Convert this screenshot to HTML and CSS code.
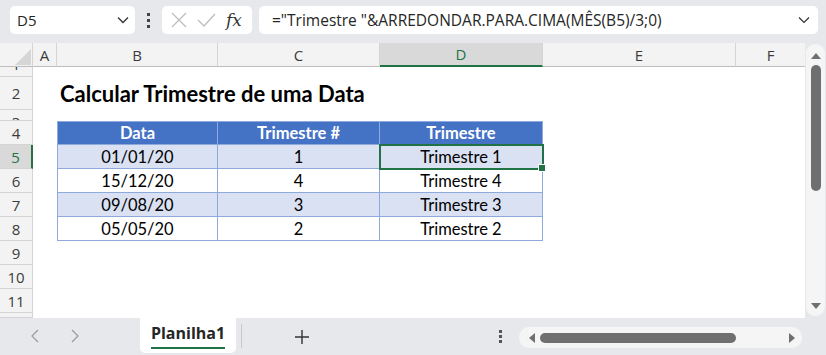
FILE: index.html
```html
<!DOCTYPE html>
<html lang="pt">
<head>
    <meta charset="UTF-8">
    <title>Planilha1</title>
    <link rel="stylesheet" href="styles.css">
</head>
<body>
    <div class="toolbar">
        <div class="namebox">
            <span>D5</span>
            <svg width="12" height="8" viewBox="0 0 12 8"><path d="M1 1.5 L6 6.5 L11 1.5" fill="none" stroke="#333" stroke-width="1.3"/></svg>
        </div>
        <div class="dots"><i></i><i></i><i></i></div>
        <div class="fxbox">
            <svg width="18" height="18" viewBox="0 0 18 18"><path d="M2 2 L16 16 M16 2 L2 16" stroke="#bdbdbd" stroke-width="1.3"/></svg>
            <svg width="20" height="18" viewBox="0 0 20 18"><path d="M2 9 L8 15 L19 3" fill="none" stroke="#bdbdbd" stroke-width="1.3"/></svg>
            <span class="fx">fx</span>
        </div>
        <div class="formula">
            <span>="Trimestre "&amp;ARREDONDAR.PARA.CIMA(MÊS(B5)/3;0)</span>
            <svg width="12" height="8" viewBox="0 0 12 8"><path d="M1 1.5 L6 6.5 L11 1.5" fill="none" stroke="#333" stroke-width="1.2"/></svg>
        </div>
    </div>

    <div class="workarea">
        <div class="sheet">
            <!-- cabeçalho das colunas -->
            <div class="corner"><svg width="20" height="20" viewBox="0 0 20 20"><path d="M19 3 L19 19 L3 19 Z" fill="#d6d6d6"/></svg></div>
            <div class="colhead">A</div>
            <div class="colhead">B</div>
            <div class="colhead">C</div>
            <div class="colhead active">D</div>
            <div class="colhead">E</div>
            <div class="colhead last">F</div>

            <!-- linha 1 -->
            <div class="rowhead r1"><span>1</span></div>
            <div class="cell"></div><div class="cell"></div><div class="cell"></div><div class="cell"></div><div class="cell"></div><div class="cell"></div>

            <!-- linha 2 -->
            <div class="rowhead">2</div>
            <div class="cell"></div>
            <div class="cell title">Calcular Trimestre de uma Data</div>
            <div class="cell"></div><div class="cell"></div><div class="cell"></div><div class="cell"></div>

            <!-- linha 3 -->
            <div class="rowhead r3"><span>3</span></div>
            <div class="cell"></div><div class="cell"></div><div class="cell"></div><div class="cell"></div><div class="cell"></div><div class="cell"></div>

            <!-- linha 4 -->
            <div class="rowhead">4</div>
            <div class="cell"></div>
            <div class="cell th first">Data</div>
            <div class="cell th">Trimestre #</div>
            <div class="cell th">Trimestre</div>
            <div class="cell"></div><div class="cell"></div>

            <div class="rowhead active">5</div>
            <div class="cell"></div>
            <div class="cell td band first">01/01/20</div>
            <div class="cell td band">1</div>
            <div class="cell td band selected">Trimestre 1<i class="handle"></i></div>
            <div class="cell"></div><div class="cell"></div>

            <div class="rowhead">6</div>
            <div class="cell"></div>
            <div class="cell td first">15/12/20</div>
            <div class="cell td">4</div>
            <div class="cell td">Trimestre 4</div>
            <div class="cell"></div><div class="cell"></div>

            <div class="rowhead">7</div>
            <div class="cell"></div>
            <div class="cell td band first">09/08/20</div>
            <div class="cell td band">3</div>
            <div class="cell td band">Trimestre 3</div>
            <div class="cell"></div><div class="cell"></div>

            <div class="rowhead">8</div>
            <div class="cell"></div>
            <div class="cell td first">05/05/20</div>
            <div class="cell td">2</div>
            <div class="cell td">Trimestre 2</div>
            <div class="cell"></div><div class="cell"></div>

            <div class="rowhead">9</div>
            <div class="cell"></div><div class="cell"></div><div class="cell"></div><div class="cell"></div><div class="cell"></div><div class="cell"></div>
            <div class="rowhead">10</div>
            <div class="cell"></div><div class="cell"></div><div class="cell"></div><div class="cell"></div><div class="cell"></div><div class="cell"></div>
            <div class="rowhead">11</div>
            <div class="cell"></div><div class="cell"></div><div class="cell"></div><div class="cell"></div><div class="cell"></div><div class="cell"></div>
            <div class="rowhead"></div>
            <div class="cell"></div><div class="cell"></div><div class="cell"></div><div class="cell"></div><div class="cell"></div><div class="cell"></div>
        </div>

        <div class="vscroll">
            <svg width="12" height="8" viewBox="0 0 12 8"><path d="M6 1 L11 7 L1 7 Z" fill="#6f6f6f"/></svg>
            <div class="vthumb"></div>
            <div class="vspace"></div>
            <svg width="12" height="8" viewBox="0 0 12 8"><path d="M1 1 L11 1 L6 7 Z" fill="#6f6f6f"/></svg>
        </div>
    </div>

    <div class="tabbar">
        <div class="navs">
            <svg width="10" height="14" viewBox="0 0 10 14"><path d="M8 1 L2 7 L8 13" fill="none" stroke="#9a9a9a" stroke-width="1.2"/></svg>
            <svg width="10" height="14" viewBox="0 0 10 14"><path d="M2 1 L8 7 L2 13" fill="none" stroke="#9a9a9a" stroke-width="1.2"/></svg>
        </div>
        <div class="tab"><span>Planilha1</span></div>
        <div class="sep"></div>
        <div class="addsheet">
            <svg width="16" height="16" viewBox="0 0 16 16"><path d="M8 1 V15 M1 8 H15" stroke="#333" stroke-width="1.4"/></svg>
        </div>
        <div class="hdots"><i></i><i></i><i></i></div>
        <div class="hscroll">
            <svg width="8" height="12" viewBox="0 0 8 12"><path d="M7 1 L7 11 L1 6 Z" fill="#6f6f6f"/></svg>
            <div class="hthumb"></div>
            <div class="hspace"></div>
            <svg width="8" height="12" viewBox="0 0 8 12"><path d="M1 1 L1 11 L7 6 Z" fill="#6f6f6f"/></svg>
        </div>
    </div>
</body>
</html>
```

FILE: styles.css
```css
body {
    margin: 0;
    width: 826px;
    height: 355px;
    overflow: hidden;
    background-color: #e6e8ec;
    font-family: "Open Sans", "Noto Sans", sans-serif;
    color: #262626;
}
.toolbar {
    height: 43px;
    display: flex;
    align-items: flex-start;
    padding: 6px 8px 0 10px;
    box-sizing: border-box;
}
.namebox {
    width: 125px;
    height: 28px;
    background-color: #fff;
    border-radius: 5px;
    box-sizing: border-box;
    display: flex;
    align-items: center;
    justify-content: space-between;
    padding: 0 6px 0 7px;
    font-size: 15px;
}
.dots {
    width: 27px;
    height: 28px;
    display: flex;
    flex-direction: column;
    align-items: center;
    justify-content: center;
    gap: 3px;
}
.dots i {
    width: 3px;
    height: 3px;
    background-color: #444;
    display: block;
}
.fxbox {
    width: 90px;
    height: 28px;
    background-color: #fff;
    border-radius: 5px;
    display: flex;
    align-items: center;
    padding: 0 6px 0 8px;
    box-sizing: border-box;
    gap: 8px;
}
.fx {
    font-family: "DejaVu Serif", "Liberation Serif", serif;
    font-style: italic;
    font-size: 17px;
    color: #333;
    margin-left: 2px;
}
.formula {
    flex: 1;
    margin-left: 7px;
    height: 28px;
    background-color: #fff;
    border-radius: 5px;
    display: flex;
    align-items: center;
    justify-content: space-between;
    padding: 0 8px 0 13px;
    box-sizing: border-box;
    font-size: 15.5px;
}
.workarea {
    display: flex;
    height: 275px;
}
.sheet {
    width: 805px;
    display: grid;
    grid-template-columns: 33px 24px 161px 162px 163px 193px 69px;
    grid-template-rows: 24px 10px 33px 11px repeat(8, 24px) 5px;
    background-color: #fff;
    overflow: hidden;
}
.corner {
    background-color: #f3f3f3;
    border-right: 1px solid #d4d4d4;
    border-bottom: 1px solid #bdbdbd;
    display: flex;
    align-items: flex-end;
    justify-content: flex-end;
}
.colhead {
    background-color: #f3f3f3;
    border-right: 1px solid #d4d4d4;
    border-bottom: 1px solid #bdbdbd;
    display: flex;
    align-items: center;
    justify-content: center;
    font-size: 15px;
    color: #3b3b3b;
}
.colhead.last {
    border-right: none;
}
.colhead.active {
    background-color: #d9d9d9;
    color: #217346;
    border-bottom: 2px solid #217346;
}
.rowhead {
    background-color: #f3f3f3;
    border-right: 1px solid #d4d4d4;
    border-bottom: 1px solid #d4d4d4;
    display: flex;
    align-items: center;
    justify-content: center;
    font-size: 15px;
    color: #3b3b3b;
    overflow: hidden;
}
.rowhead.r1 span,
.rowhead.r3 span {
    line-height: 24px;
}
.rowhead.r1 {
    align-items: flex-end;
}
.rowhead.r3 {
    align-items: flex-start;
}
.rowhead.active {
    background-color: #d9d9d9;
    color: #217346;
    border-right: 2px solid #217346;
}
.cell {
    box-sizing: border-box;
    display: flex;
    align-items: center;
    justify-content: center;
    font-family: "Lato", "Open Sans", sans-serif;
    font-size: 16.5px;
    color: #000;
    white-space: nowrap;
    position: relative;
}
.title {
    justify-content: flex-start;
    padding-left: 3px;
    font-size: 22px;
    font-weight: bold;
    overflow: visible;
}
.th {
    background-color: #4472c4;
    color: #fff;
    font-weight: bold;
    border-right: 1px solid #8ea9db;
    border-bottom: 1px solid #8ea9db;
    border-top: 1px solid #8ea9db;
}
.td {
    border-right: 1px solid #8ea9db;
    border-bottom: 1px solid #8ea9db;
}
.first {
    border-left: 1px solid #8ea9db;
}
.band {
    background-color: #d9e1f2;
}
.selected {
    outline: 2px solid #217346;
    outline-offset: -1px;
    z-index: 2;
}
.handle {
    position: absolute;
    right: -4px;
    bottom: -4px;
    width: 6px;
    height: 6px;
    background-color: #217346;
    border: 1px solid #fff;
}
.vscroll {
    width: 19px;
    margin: 1px 0 2px 1px;
    background-color: #f5f5f5;
    border-radius: 9px;
    display: flex;
    flex-direction: column;
    align-items: center;
    padding: 8px 0 6px;
    box-sizing: border-box;
}
.vthumb {
    width: 10px;
    height: 126px;
    margin-top: 5px;
    background-color: #6f6f6f;
    border-radius: 5px;
}
.vspace {
    flex: 1;
}
.tabbar {
    height: 37px;
    display: flex;
    align-items: flex-start;
}
.navs {
    width: 140px;
    display: flex;
    gap: 30px;
    padding: 11px 0 0 30px;
    box-sizing: border-box;
}
.tab {
    width: 96px;
    height: 35px;
    background-color: #fff;
    border-radius: 0 0 5px 5px;
    display: flex;
    justify-content: center;
}
.tab span {
    font-size: 16px;
    font-weight: bold;
    color: #262626;
    height: 27px;
    margin-top: 4px;
    border-bottom: 2px solid #217346;
    box-sizing: border-box;
}
.sep {
    width: 1px;
    height: 24px;
    margin: 6px 0 0 5px;
    background-color: #c8c8c8;
}
.addsheet {
    width: 120px;
    padding: 10px 0 0 52px;
    box-sizing: border-box;
}
.hdots {
    width: 20px;
    margin-left: 137px;
    padding-top: 12px;
    display: flex;
    flex-direction: column;
    gap: 2px;
}
.hdots i {
    width: 3px;
    height: 3px;
    background-color: #555;
    display: block;
}
.hscroll {
    width: 283px;
    height: 21px;
    margin-top: 9px;
    background-color: #f5f5f5;
    border-radius: 10px;
    display: flex;
    align-items: center;
    padding: 0 6px 0 9px;
    box-sizing: border-box;
}
.hthumb {
    width: 196px;
    height: 10px;
    margin-left: 4px;
    background-color: #6f6f6f;
    border-radius: 5px;
}
.hspace {
    flex: 1;
}
```
